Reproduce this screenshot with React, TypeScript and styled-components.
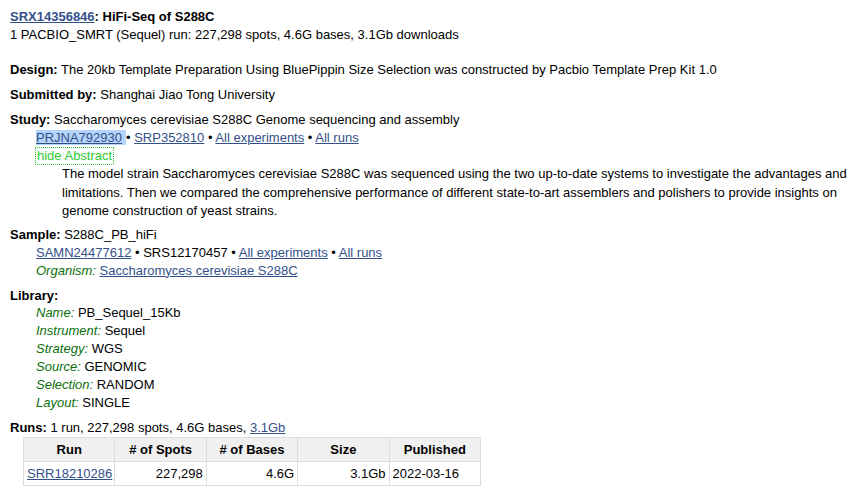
import React from "react";
import styled, { createGlobalStyle } from "styled-components";

const Global = createGlobalStyle`
  html, body { margin: 0; padding: 0; background: #fff; }
  body { font-family: "Liberation Sans", Arial, sans-serif; font-size: 13px; color: #000; }
`;

const Page = styled.div`
  padding: 8px 10px 10px 10px;
  line-height: 18px;
`;

const Link = styled.a`
  color: #34508a;
  text-decoration: underline;
  cursor: pointer;
`;

const Highlight = styled(Link)`
  background: #b4d5fb;
  padding-right: 4px;
`;

const Title = styled.div`
  font-weight: bold;
`;

const Summary = styled.div`
  margin-bottom: 17px;
`;

const Block = styled.div<{ $gap?: number }>`
  margin-top: ${(p) => p.$gap ?? 7}px;
`;

const Label = styled.b``;

const Indent = styled.div<{ $level?: number }>`
  padding-left: ${(p) => (p.$level ?? 1) * 26}px;
`;

const Toggle = styled.span`
  display: inline-block;
  color: #2fcc33;
  border: 1px dotted #2fcc33;
  line-height: 16px;
  padding: 0 1px;
  margin-left: -1px;
`;

const Abstract = styled.div`
  padding-left: 52px;
  line-height: 18.5px;
`;

const Field = styled.i`
  color: #0b6e0b;
`;

const List = styled.div`
  margin-top: -1px;
`;

const Table = styled.table`
  border-collapse: collapse;
  margin-left: 13px;
  line-height: 15px;
  table-layout: fixed;
  width: 458px;
`;

const Th = styled.th`
  background: #f0f0f0;
  border: 1px solid #dcdcdc;
  font-weight: bold;
  padding: 4px 3px;
  text-align: center;
`;

const Td = styled.td<{ $align?: string }>`
  border: 1px solid #dcdcdc;
  padding: 4px 3px;
  text-align: ${(p) => p.$align ?? "left"};
`;

export default function App() {
  return (
    <Page>
      <Global />
      <Title>
        <Link>SRX14356846</Link>: HiFi-Seq of S288C
      </Title>
      <Summary>1 PACBIO_SMRT (Sequel) run: 227,298 spots, 4.6G bases, 3.1Gb downloads</Summary>

      <Block>
        <Label>Design:</Label> The 20kb Template Preparation Using BluePippin Size Selection was constructed by Pacbio Template Prep Kit 1.0
      </Block>
      <Block>
        <Label>Submitted by:</Label> Shanghai Jiao Tong University
      </Block>
      <Block>
        <Label>Study:</Label> Saccharomyces cerevisiae S288C Genome sequencing and assembly
        <Indent>
          <Highlight>PRJNA792930</Highlight>• <Link>SRP352810</Link> • <Link>All experiments</Link> • <Link>All runs</Link>
        </Indent>
        <Indent>
          <Toggle>hide Abstract</Toggle>
        </Indent>
        <Abstract>
          The model strain Saccharomyces cerevisiae S288C was sequenced using the two up-to-date systems to investigate the advantages and limitations. Then we compared the comprehensive performance of different state-to-art assemblers and polishers to provide insights on genome construction of yeast strains.
        </Abstract>
      </Block>
      <Block $gap={5}>
        <Label>Sample:</Label> S288C_PB_hiFi
        <Indent>
          <Link>SAMN24477612</Link> • SRS12170457 • <Link>All experiments</Link> • <Link>All runs</Link>
        </Indent>
        <Indent>
          <Field>Organism:</Field> <Link>Saccharomyces cerevisiae S288C</Link>
        </Indent>
      </Block>
      <Block>
        <Label>Library:</Label>
        <List>
          <Indent><Field>Name:</Field> PB_Sequel_15Kb</Indent>
          <Indent><Field>Instrument:</Field> Sequel</Indent>
          <Indent><Field>Strategy:</Field> WGS</Indent>
          <Indent><Field>Source:</Field> GENOMIC</Indent>
          <Indent><Field>Selection:</Field> RANDOM</Indent>
          <Indent><Field>Layout:</Field> SINGLE</Indent>
        </List>
      </Block>
      <Block>
        <Label>Runs:</Label> 1 run, 227,298 spots, 4.6G bases, <Link>3.1Gb</Link>
        <Table>
          <thead>
            <tr>
              <Th>Run</Th>
              <Th># of Spots</Th>
              <Th># of Bases</Th>
              <Th>Size</Th>
              <Th>Published</Th>
            </tr>
          </thead>
          <tbody>
            <tr>
              <Td><Link>SRR18210286</Link></Td>
              <Td $align="right">227,298</Td>
              <Td $align="right">4.6G</Td>
              <Td $align="right">3.1Gb</Td>
              <Td>2022-03-16</Td>
            </tr>
          </tbody>
        </Table>
      </Block>
    </Page>
  );
}
